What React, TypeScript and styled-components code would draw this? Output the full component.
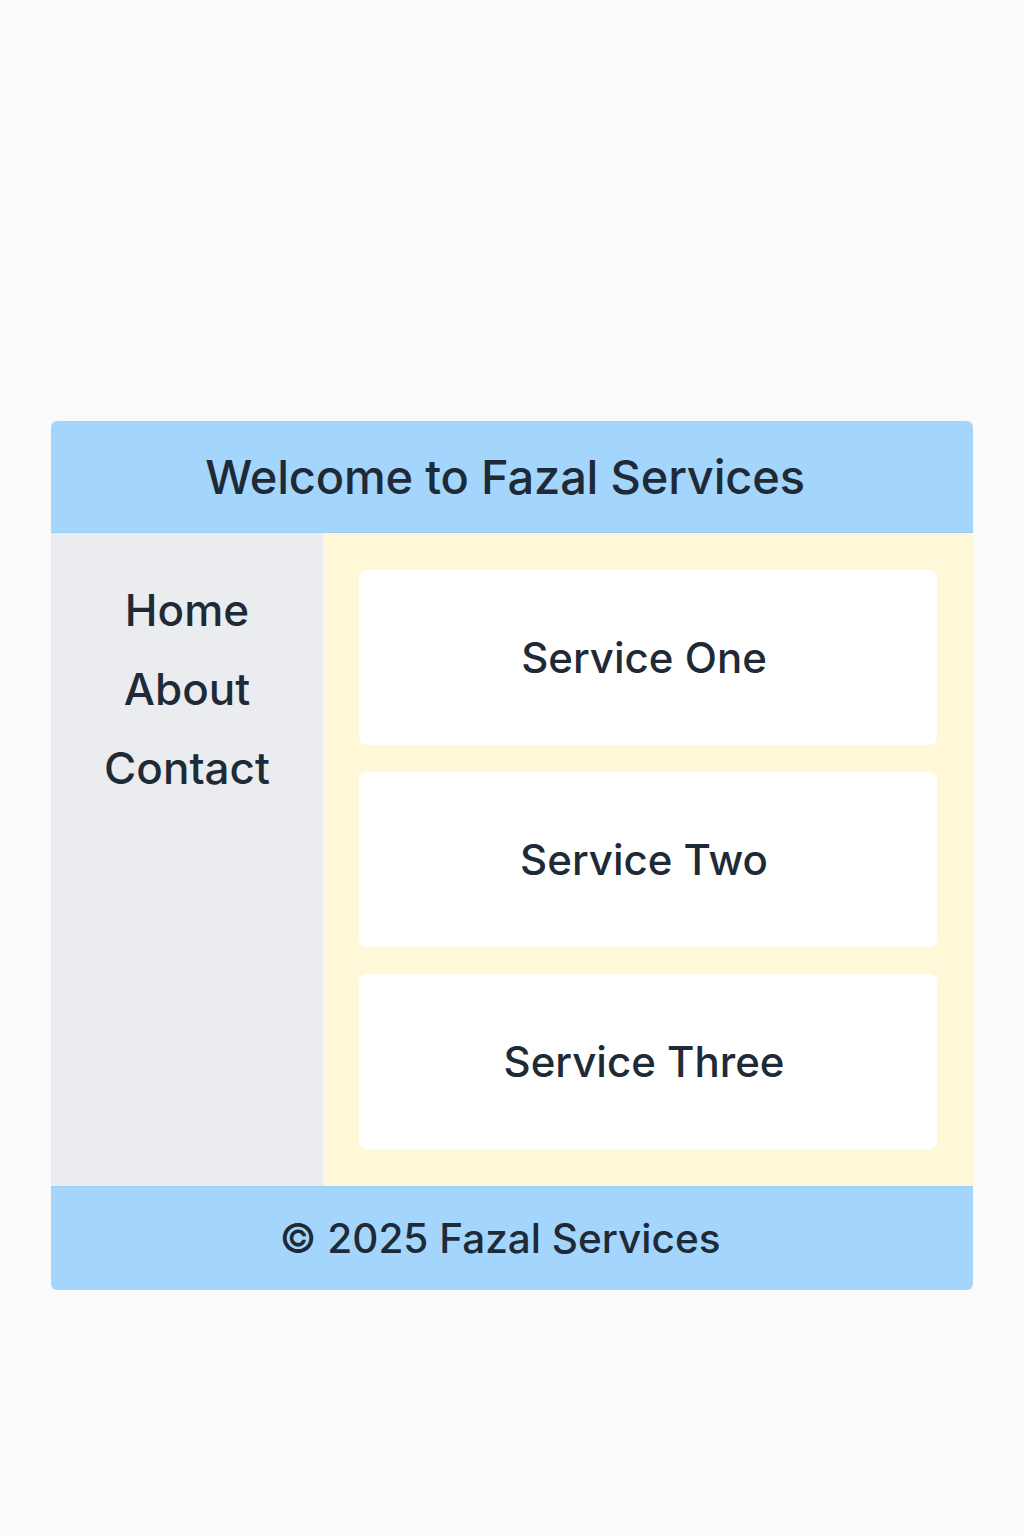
import React from "react";
import styled, { createGlobalStyle } from "styled-components";

const Global = createGlobalStyle`
  html, body { margin: 0; padding: 0; background: #fbfbfb; }
  body { font-family: Inter, "Noto Sans", "Liberation Sans", sans-serif; color: #1f2a37; }
`;

const Page = styled.div`
  padding: 421px 51px 246px;
`;

const Frame = styled.div`
  border-radius: 6px;
  overflow: hidden;
  display: flex;
  flex-direction: column;
`;

const Header = styled.header`
  height: 112px;
  background: #a4d5fc;
  display: flex;
  align-items: center;
  justify-content: center;
  padding-right: 14px;
  border-bottom: 1px solid #9ccdf5;
  box-sizing: border-box;
`;

const Title = styled.h1`
  margin: 0;
  font-size: 47px;
  font-weight: 500;
  letter-spacing: -0.2px;
`;

const Body = styled.div`
  display: grid;
  grid-template-columns: 272px 1fr;
  height: 653px;
`;

const Sidebar = styled.nav`
  background: #ebecf0;
  display: flex;
  flex-direction: column;
  align-items: center;
  padding-top: 48px;
  gap: 20px;
`;

const NavItem = styled.a`
  font-size: 44px;
  font-weight: 500;
  line-height: 59px;
  color: #1f2a37;
  text-decoration: none;
`;

const Main = styled.main`
  background: #fef8d9;
  padding: 37px 36px;
  display: flex;
  flex-direction: column;
  gap: 27px;
`;

const Card = styled.div`
  background: #ffffff;
  border-radius: 8px;
  height: 175px;
  display: flex;
  align-items: center;
  justify-content: center;
  padding-right: 8px;
  font-size: 42px;
  font-weight: 500;
`;

const Footer = styled.footer`
  height: 104px;
  background: #a4d5fc;
  display: flex;
  align-items: center;
  justify-content: center;
  padding-right: 24px;
  font-size: 40.5px;
  font-weight: 500;
  border-top: 1px solid #9ccdf5;
  box-sizing: border-box;
`;

export default function App() {
  return (
    <>
      <Global />
      <Page>
        <Frame>
          <Header>
            <Title>Welcome to Fazal Services</Title>
          </Header>
          <Body>
            <Sidebar>
              <NavItem>Home</NavItem>
              <NavItem>About</NavItem>
              <NavItem>Contact</NavItem>
            </Sidebar>
            <Main>
              <Card>Service One</Card>
              <Card>Service Two</Card>
              <Card>Service Three</Card>
            </Main>
          </Body>
          <Footer>© 2025 Fazal Services</Footer>
        </Frame>
      </Page>
    </>
  );
}
